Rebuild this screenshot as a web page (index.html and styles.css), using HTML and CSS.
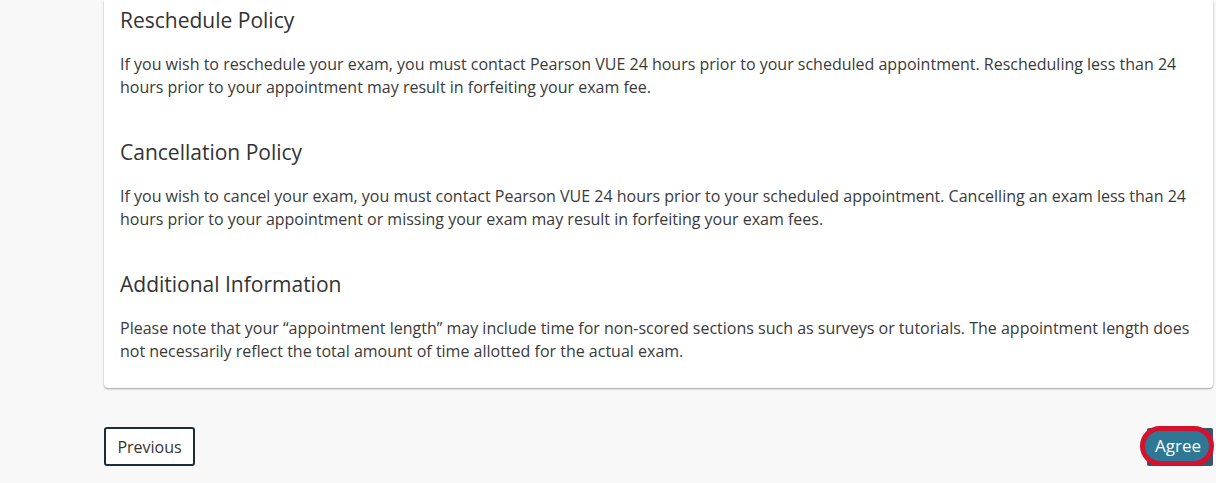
FILE: index.html
```html
<!DOCTYPE html>
<html lang="en">
<head>
<meta charset="utf-8">
<title>Policies</title>
<link rel="stylesheet" href="styles.css">
</head>
<body>
<div class="page">
  <div class="card">
    <section class="policy">
      <h2>Reschedule Policy</h2>
      <p>If you wish to reschedule your exam, you must contact Pearson VUE 24 hours prior to your scheduled appointment. Rescheduling less than 24 hours prior to your appointment may result in forfeiting your exam fee.</p>
    </section>
    <section class="policy">
      <h2>Cancellation Policy</h2>
      <p>If you wish to cancel your exam, you must contact Pearson VUE 24 hours prior to your scheduled appointment. Cancelling an exam less than 24 hours prior to your appointment or missing your exam may result in forfeiting your exam fees.</p>
    </section>
    <section class="policy last">
      <h2>Additional Information</h2>
      <p>Please note that your “appointment length” may include time for non-scored sections such as surveys or tutorials. The appointment length does not necessarily reflect the total amount of time allotted for the actual exam.</p>
    </section>
  </div>
  <div class="actions">
    <button class="btn-prev">Previous</button>
    <button class="btn-agree"><span class="ring"></span><span class="label">Agree</span></button>
  </div>
</div>
</body>
</html>
```
FILE: styles.css
```css
html, body {
  margin: 0;
  padding: 0;
}
body {
  background: #f8f8f9;
  font-family: "Open Sans", "Liberation Sans", sans-serif;
  color: #333;
  overflow: hidden;
}
.page {
  padding: 0 3px 0 104px;
}
.card {
  background: #fff;
  border-radius: 0 0 4px 4px;
  box-shadow: 0 1px 2px rgba(0,0,0,0.35), 0 0 1px rgba(0,0,0,0.15);
  padding: 8px 16px 25px 16px;
}
.policy h2 {
  font-size: 21px;
  font-weight: 400;
  line-height: 25px;
  margin: 0 0 20px 0;
  color: #333;
}
.policy p {
  font-size: 16px;
  line-height: 23px;
  margin: 0 0 41px 0;
  color: #3a3a3a;
}
.policy.last p {
  margin-bottom: 0;
}
.actions {
  display: flex;
  justify-content: space-between;
  align-items: center;
  padding-top: 39px;
}
.btn-prev {
  font-family: "Open Sans", "Liberation Sans", sans-serif;
  font-size: 16px;
  color: #333;
  background: #fff;
  border: 2px solid #1d2b3a;
  border-radius: 3px;
  width: 91px;
  height: 39px;
  padding: 0;
}
.btn-agree {
  position: relative;
  font-family: "Open Sans", "Liberation Sans", sans-serif;
  font-size: 17px;
  color: #fff;
  background: #3a5469;
  border: none;
  border-radius: 2px;
  width: 66px;
  height: 38px;
  padding: 0;
}
.btn-agree .ring {
  position: absolute;
  left: -7px;
  top: -2px;
  width: 64px;
  height: 30px;
  border: 5px solid #d2122e;
  border-radius: 21px;
  background: #2e7896;
}
.btn-agree .label {
  position: relative;
  left: -2px;
  top: -1px;
}
```
